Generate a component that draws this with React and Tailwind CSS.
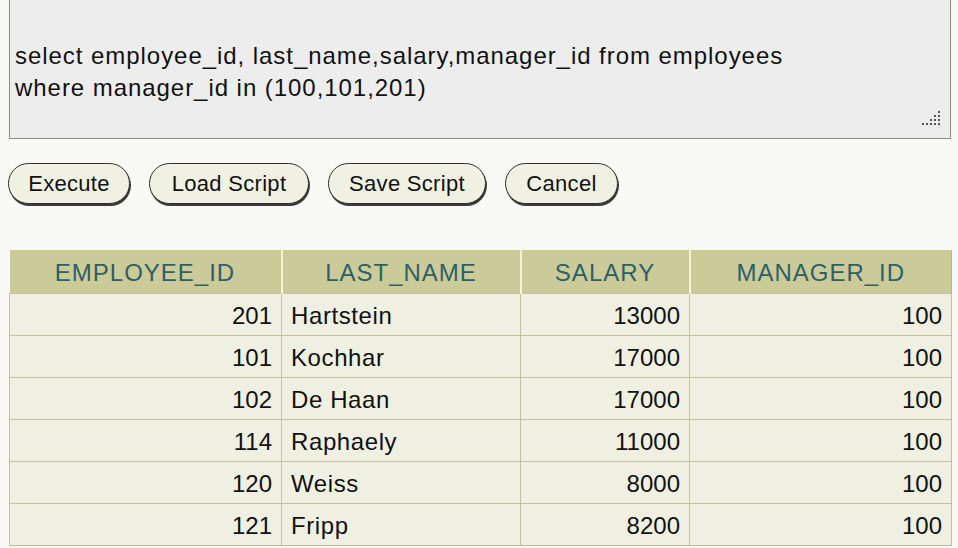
import React from "react";

const rows = [
  ["201", "Hartstein", "13000", "100"],
  ["101", "Kochhar", "17000", "100"],
  ["102", "De Haan", "17000", "100"],
  ["114", "Raphaely", "11000", "100"],
  ["120", "Weiss", "8000", "100"],
  ["121", "Fripp", "8200", "100"],
];

function Btn({ children, w }) {
  return (
    <button
      className={`h-[41px] rounded-full border border-[#2e2e2e] bg-[#f1f1e3] shadow-[1px_2px_0_#3a3a3a] text-[22px] leading-none text-[#111] flex items-center justify-center ${w}`}
      style={{ fontFamily: '"Liberation Sans",Arial,sans-serif' }}
    >
      <span className="inline-block whitespace-nowrap tracking-[0.3px]">{children}</span>
    </button>
  );
}

export default function App() {
  return (
    <div
      className="w-[958px] h-[548px] overflow-hidden bg-[#f9f9f6] text-[#111]"
      style={{ fontFamily: '"Liberation Sans", Arial, sans-serif' }}
    >
      <div className="ml-[9px] w-[942px] h-[139px] bg-[#ededed] border-l border-r border-b border-[#8c8c8c] relative pt-[40px] pl-[5px] text-[24px] leading-[32px] tracking-[0.95px]">
        <div>select employee_id, last_name,salary,manager_id from employees</div>
        <div>where manager_id in (100,101,201)</div>
        <svg className="absolute right-[8px] bottom-[7px]" width="22" height="22" viewBox="0 0 22 22">
          {[[18, 2], [14, 6], [18, 6], [10, 10], [14, 10], [18, 10], [2, 14], [6, 14], [10, 14], [14, 14], [18, 14]].map(([x, y], i) => (
            <rect key={i} x={x} y={y} width="2" height="2" fill="#555" />
          ))}
        </svg>
      </div>

      <div className="flex gap-[19px] ml-[8px] mt-[24px]">
        <Btn w="w-[122px]">Execute</Btn>
        <Btn w="w-[160px]">Load Script</Btn>
        <Btn w="w-[158px]">Save Script</Btn>
        <Btn w="w-[113px]">Cancel</Btn>
      </div>

      <table className="ml-[9px] mt-[46px] border-collapse table-fixed w-[942px] text-[24px]">
        <colgroup>
          <col className="w-[272px]" />
          <col className="w-[239px]" />
          <col className="w-[169px]" />
          <col className="w-[262px]" />
        </colgroup>
        <thead>
          <tr className="h-[43px] bg-[#cbcb9a] text-[#2f5f66] tracking-[1px]">
            <th className="font-normal text-center pt-[3px] border-r-2 border-[#f3f3d6]">EMPLOYEE_ID</th>
            <th className="font-normal text-center pt-[3px] border-r-2 border-[#f3f3d6]">LAST_NAME</th>
            <th className="font-normal text-center pt-[3px] border-r-2 border-[#f3f3d6]">SALARY</th>
            <th className="font-normal text-center pt-[3px] border-r border-[#b8b890]">MANAGER_ID</th>
          </tr>
        </thead>
        <tbody>
          {rows.map((r, i) => (
            <tr key={i} className="h-[42px] bg-[#f0f0e2]">
              <td className="text-right pr-[9px] pt-[3px] border border-[#c2c29e]">{r[0]}</td>
              <td className="text-left pl-[9px] pt-[3px] border border-[#c2c29e] tracking-[0.6px]">{r[1]}</td>
              <td className="text-right pr-[9px] pt-[3px] border border-[#c2c29e]">{r[2]}</td>
              <td className="text-right pr-[9px] pt-[3px] border border-[#c2c29e]">{r[3]}</td>
            </tr>
          ))}
        </tbody>
      </table>
    </div>
  );
}
